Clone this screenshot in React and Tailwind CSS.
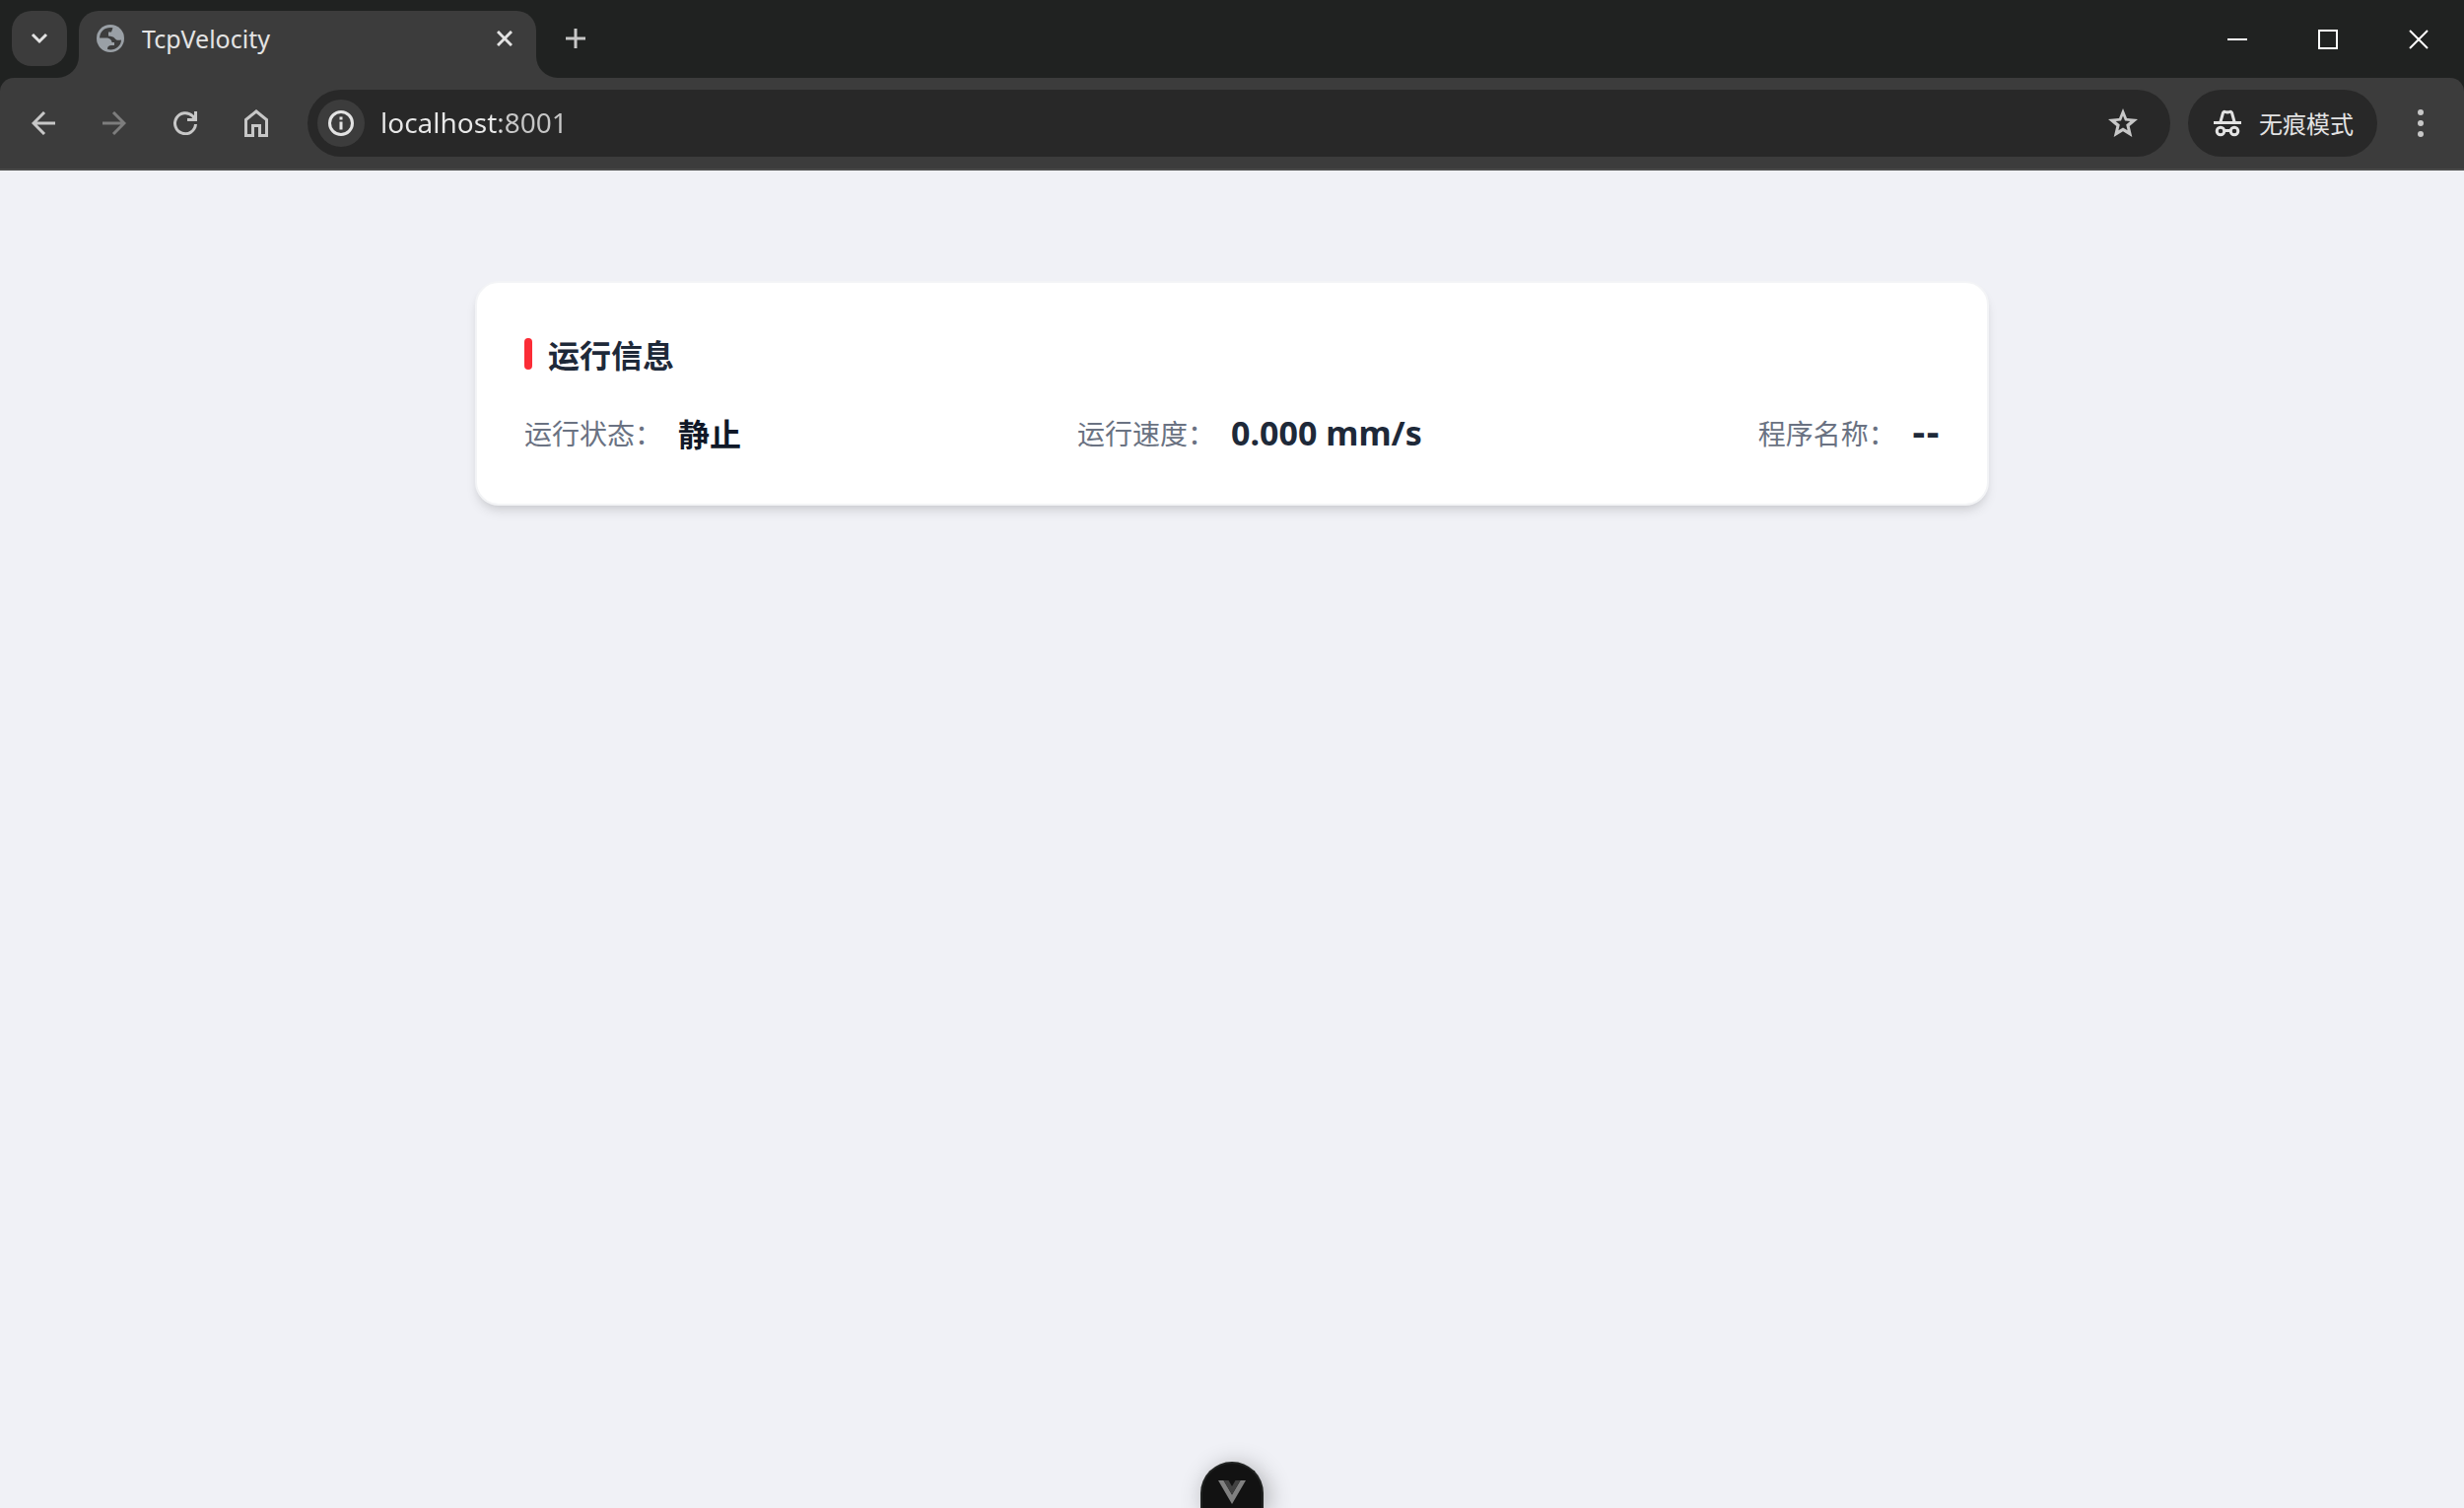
import React, { useState } from 'react';

const runInfo = [
  { label: '运行状态：', value: '静止', className: 'text-[32px] text-gray-900' },
  { label: '运行速度：', value: '0.000 mm/s', className: "text-[34px] text-gray-800 font-['Noto_Sans',sans-serif]" },
  { label: '程序名称：', value: '--', className: "text-[34px] text-gray-800 font-['DejaVu_Sans',sans-serif]" },
];

function ToolbarButton({ label, className = 'text-[#c7c7c7]', children }) {
  return (
    <button aria-label={label} className={`flex size-[68px] shrink-0 items-center justify-center rounded-full ${className}`}>
      {children}
    </button>
  );
}

function WindowButton({ label, children }) {
  return (
    <button aria-label={label} className="flex h-20 w-23 items-center justify-center text-white">
      <svg width="20" height="20" viewBox="0 0 20 20" fill="none" stroke="currentColor" strokeWidth="2">{children}</svg>
    </button>
  );
}

function Globe() {
  return (
    <svg className="shrink-0 text-[#9aa0a6]" width="28" height="28" viewBox="0 0 28 28">
      <circle cx="14" cy="14" r="14" fill="currentColor" />
      <path
        d="M14 3C8 3 3.500 7 3 13.500H9.500C13 13.500 15.500 15.500 15.500 18H18V21H15C12.500 21 11 22 11 25C18 27 25 22 25 15.500C22 16 20 16 18.500 14C17 12 15 12 12 11.500V7.500H15L16.500 3.200Z"
        fill="#3c3c3c"
      />
    </svg>
  );
}

function TabStrip() {
  return (
    <div className="flex h-[79px] items-start justify-between">
      <div className="flex items-start pl-3 pt-[11px]">
        <button aria-label="Search tabs" className="flex size-14 items-center justify-center rounded-[20px] bg-[#3c3c3c] text-[#e3e3e3]">
          <svg width="18" height="12" viewBox="0 0 18 12" fill="none" stroke="currentColor" strokeWidth="3">
            <path d="M2 2l7 7 7-7" />
          </svg>
        </button>
        <div className="relative ml-3 flex h-[68px] w-[464px] items-start rounded-t-[20px] bg-[#3c3c3c] pl-[18px] pr-4">
          <svg className="absolute bottom-0 right-full" width="22" height="22" viewBox="0 0 22 22">
            <path d="M22 0A22 22 0 0 1 0 22H22Z" fill="#3c3c3c" />
          </svg>
          <svg className="absolute bottom-0 left-full" width="22" height="22" viewBox="0 0 22 22">
            <path d="M0 0A22 22 0 0 0 22 22H0Z" fill="#3c3c3c" />
          </svg>
          <div className="flex h-14 grow items-center gap-[18px]">
            <Globe />
            <span className="grow text-[25px] leading-8 text-[#e3e3e3]">TcpVelocity</span>
            <button aria-label="Close tab" className="flex size-8 items-center justify-center text-[#e3e3e3]">
              <svg width="16" height="16" viewBox="0 0 16 16" fill="none" stroke="currentColor" strokeWidth="3">
                <path d="M1 1l14 14M15 1L1 15" />
              </svg>
            </button>
          </div>
        </div>
        <button aria-label="New tab" className="ml-3 flex size-14 items-center justify-center text-[#c7c7c7]">
          <svg width="20" height="20" viewBox="0 0 20 20" fill="none" stroke="currentColor" strokeWidth="3">
            <path d="M10 0v20M0 10h20" />
          </svg>
        </button>
      </div>
      <div className="flex">
        <WindowButton label="Minimize"><path d="M0 10h20" /></WindowButton>
        <WindowButton label="Maximize"><rect x="1" y="1" width="18" height="18" /></WindowButton>
        <WindowButton label="Close"><path d="M1 1l18 18M19 1L1 19" /></WindowButton>
      </div>
    </div>
  );
}

function Toolbar() {
  const [url, setUrl] = useState('localhost:8001');

  return (
    <div className="flex items-center rounded-t-[14px] border-b-2 border-[#4a4a4a] bg-[#3c3c3c] px-[10px] py-3">
      <div className="flex gap-1">
        <ToolbarButton label="Back">
          <svg width="24" height="24" viewBox="0 0 24 24" fill="none" stroke="currentColor" strokeWidth="3">
            <path d="M13 1L2 12l11 11M2 12h22" />
          </svg>
        </ToolbarButton>
        <ToolbarButton label="Forward" className="text-[#7d7d7d]">
          <svg width="24" height="24" viewBox="0 0 24 24" fill="none" stroke="currentColor" strokeWidth="3">
            <path d="M11 1l11 11-11 11M22 12H0" />
          </svg>
        </ToolbarButton>
        <ToolbarButton label="Reload">
          <svg width="24" height="24" viewBox="0 0 24 24" fill="none" stroke="currentColor" strokeWidth="3">
            <path d="M22.500 13A10.500 10.500 0 1 1 19.500 4.800L22 8M22.500 0V8.500H14" />
          </svg>
        </ToolbarButton>
        <ToolbarButton label="Home">
          <svg width="24" height="28" viewBox="0 0 24 28" fill="none" stroke="currentColor" strokeWidth="3">
            <path d="M1.500 10.500L12 2l10.500 8.500v16h-7v-10h-7v10h-7z" />
          </svg>
        </ToolbarButton>
      </div>
      <div className="ml-[18px] flex h-[68px] grow items-center rounded-full bg-[#282828] pl-[10px] pr-[14px]">
        <button aria-label="Site information" className="flex size-12 items-center justify-center rounded-full bg-[#3c3c3c] text-[#e3e3e3]">
          <svg width="26" height="26" viewBox="0 0 26 26" fill="none" stroke="currentColor" strokeWidth="3">
            <circle cx="13" cy="13" r="11.500" />
            <path d="M13 11.500v8M13 6.500v3" />
          </svg>
        </button>
        <input
          aria-label="Address"
          className="ml-4 grow bg-[linear-gradient(to_right,#e8e8e8_122px,#c7c7c7_122px)] bg-clip-text pb-0.5 text-[28px] leading-10 text-transparent caret-white outline-none"
          type="text"
          value={url}
          onChange={(e) => setUrl(e.target.value)}
        />
        <button aria-label="Bookmark this tab" className="flex size-[68px] items-center justify-center text-[#c7c7c7]">
          <svg width="30" height="30" viewBox="0 0 30 30" fill="currentColor" fillRule="evenodd">
            <path d="M15 0L19 10L30 11L21.700 18L24.300 29L15 23.200L5.700 29L8.300 18L0 11L11 10ZM15 7.500L13 12.500L7.700 13L11.800 16.600L10.400 22.200L15 19.500L19.600 22.200L18.200 16.600L22.300 13L17 12.500Z" />
          </svg>
        </button>
      </div>
      <button className="ml-[18px] flex h-[68px] w-48 shrink-0 items-center gap-[18px] rounded-full bg-[#282828] pl-[26px] text-[24px] leading-8 text-[#e3e3e3] font-['Noto_Sans_CJK_SC',sans-serif]">
        <svg width="28" height="28" viewBox="0 0 28 28" fill="none" stroke="currentColor" strokeWidth="3" strokeLinejoin="round">
          <path d="M0 13.500h28M7 12.500L9.500 3.500Q10 2 11.500 2.500L14 3L16.500 2.500Q18 2 18.500 3.500L21 12.500" />
          <circle cx="7" cy="22" r="3.800" />
          <circle cx="21" cy="22" r="3.800" />
          <path d="M10.500 21.500h7" />
        </svg>
        <span className="whitespace-nowrap">无痕模式</span>
      </button>
      <div className="ml-[10px]">
        <ToolbarButton label="Menu">
          <svg width="6" height="28" viewBox="0 0 6 28" fill="currentColor">
            <circle cx="3" cy="3" r="3" />
            <circle cx="3" cy="14" r="3" />
            <circle cx="3" cy="25" r="3" />
          </svg>
        </ToolbarButton>
      </div>
    </div>
  );
}

export default function App() {
  return (
    <div className="flex min-h-screen flex-col bg-[#f0f1f6] font-['Noto_Sans','Noto_Sans_CJK_SC',sans-serif]">
      <header className="bg-[#202221]">
        <TabStrip />
        <Toolbar />
      </header>

      <main className="grow px-8 pt-28 font-['Noto_Sans_CJK_SC',sans-serif]">
        <section className="mx-auto max-w-[1536px] rounded-3xl border-2 border-gray-100 bg-white p-12 shadow-[0_8px_12px_-2px_rgb(0_0_0/0.1),0_4px_8px_-4px_rgb(0_0_0/0.1)]">
          <h2 className="mb-8 flex items-center gap-4 text-[32px] leading-12 font-bold text-gray-800">
            <span className="h-8 w-2 rounded-full bg-[#fb2c36]" />
            运行信息
          </h2>
          <dl className="flex justify-between">
            {runInfo.map((item) => (
              <div key={item.label} className="flex items-center gap-4">
                <dt className="text-[28px] leading-12 text-gray-500">{item.label}</dt>
                <dd className={`leading-12 font-bold ${item.className}`}>{item.value}</dd>
              </div>
            ))}
          </dl>
        </section>
      </main>

      <button
        aria-label="Toggle Vue DevTools"
        className="fixed bottom-0 left-1/2 flex h-[47px] w-16 -translate-x-1/2 justify-center rounded-t-full border-2 border-b-0 border-[#202221] bg-[#121212] pt-[17px] shadow-[4px_4px_24px_rgb(0_0_0/0.3)]"
      >
        <svg width="28" height="24" viewBox="0 0 28 24">
          <path d="M0 0h5.500L14 14.500L22.500 0H28L14 24z" fill="#808080" />
          <path d="M5.500 0h5L14 6l3.500-6h5L14 14.500z" fill="#424242" />
        </svg>
      </button>
    </div>
  );
}
